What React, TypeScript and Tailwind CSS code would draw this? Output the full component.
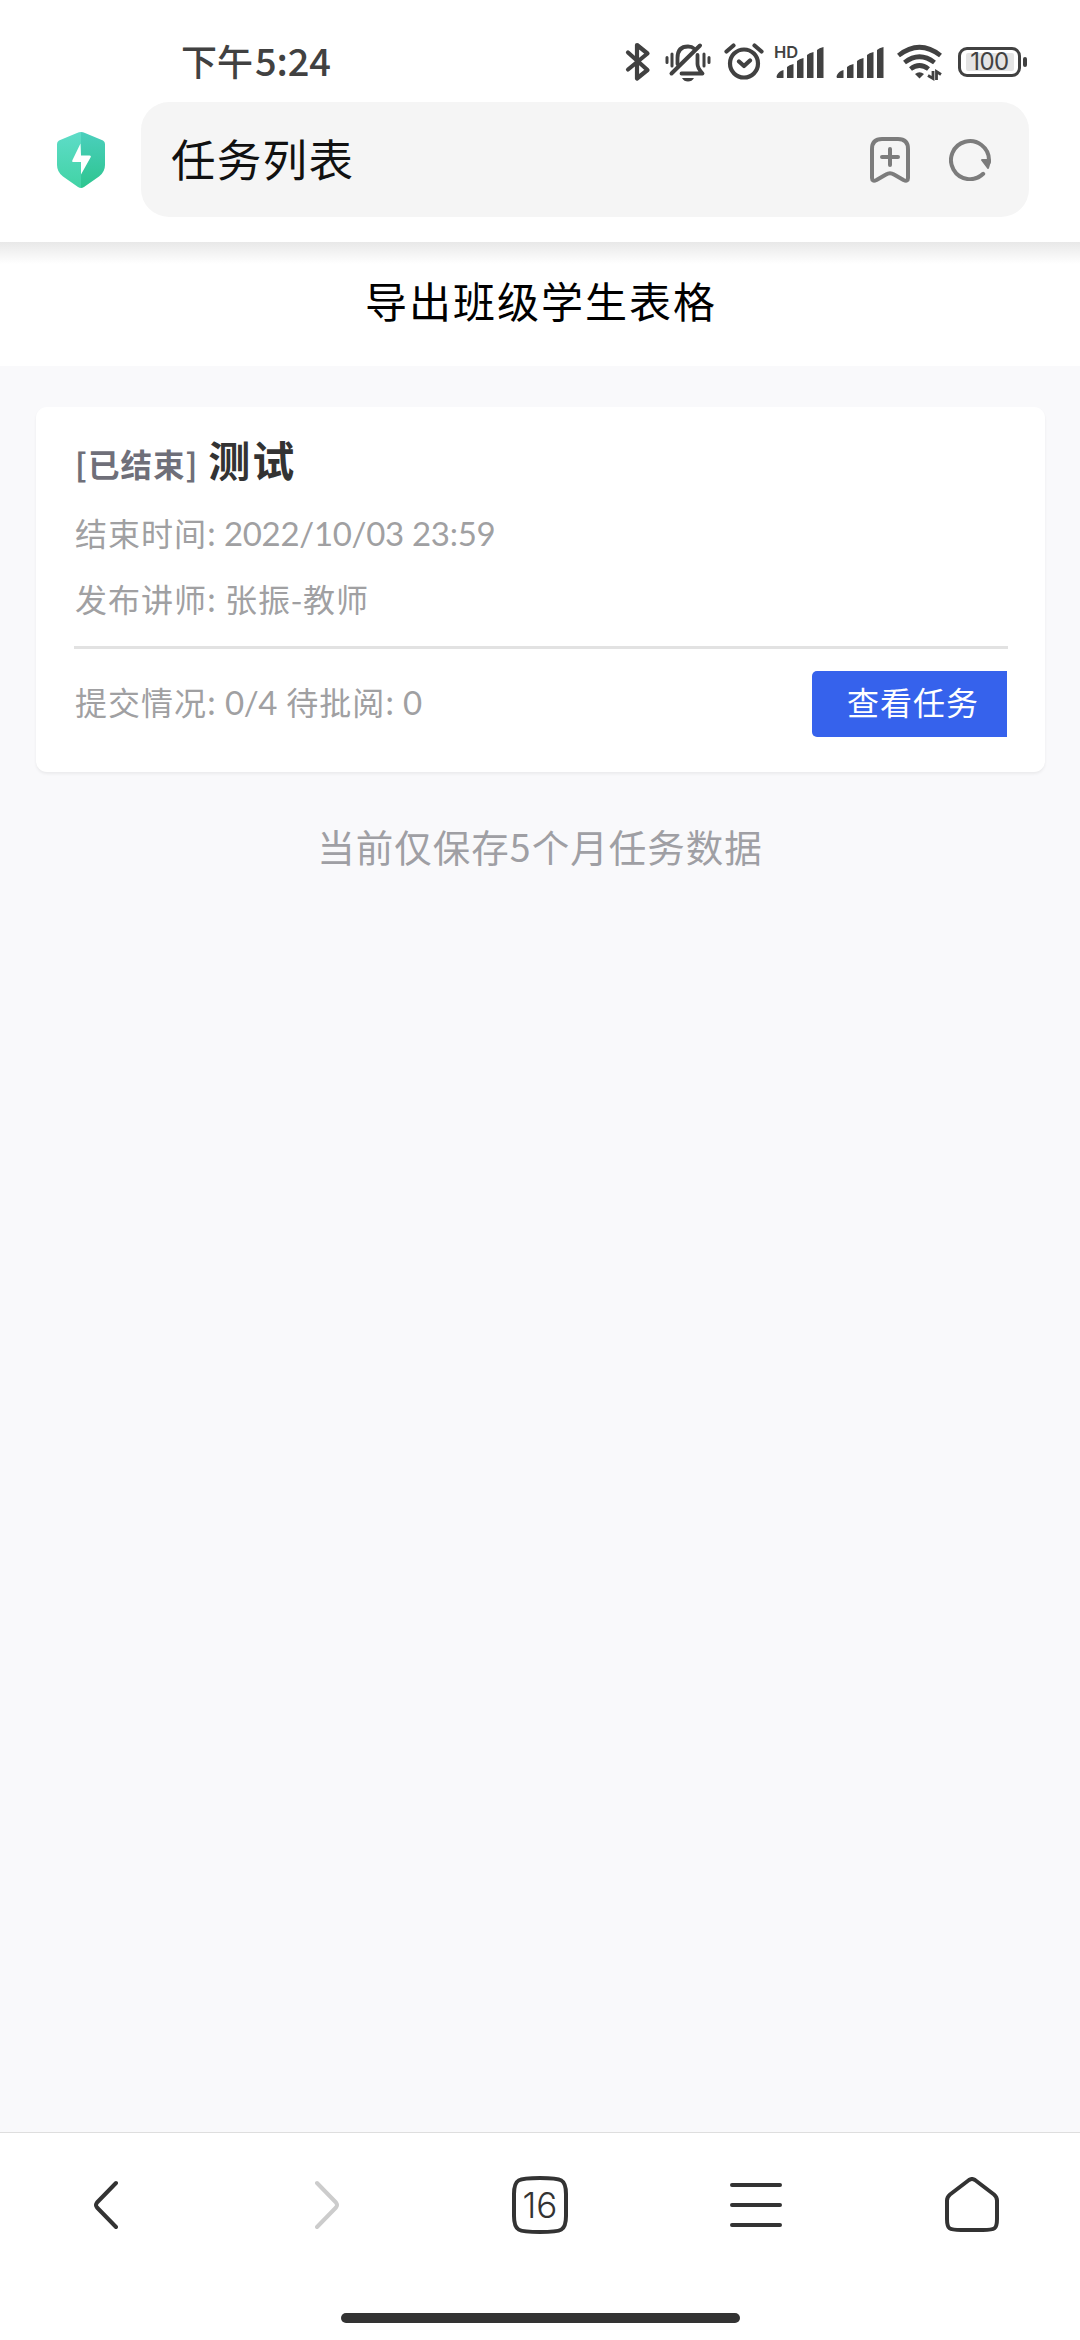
const CJK = "font-['Noto_Sans_CJK_SC',sans-serif]";
const NUM = "font-[Lato,'Noto_Sans_CJK_SC',sans-serif]";

const TASK = {
  status: "[已结束]",
  title: "测试",
  endTime: "2022/10/03 23:59",
  teacher: "张振-教师",
  submitted: "0/4",
  pending: "0",
};

function SignalBars() {
  return (
    <svg width="48" height="31" viewBox="0 0 48 31" fill="#414141">
      <path d="M1 31q-1-1 0-3 2-4 6.500-5v8zM11 31V20q2-2 6.500-3v14zM21 31V14q2-2 6.500-3v20zM31 31V8q2-2 6.500-3v26zM41 31V3q2-2 6.500-3v31z" />
    </svg>
  );
}

function StatusBar() {
  return (
    <div className="flex h-[102px] items-start pl-[181px] pr-[53px] text-[#414141]">
      <div className={`mt-[35px] flex h-[50px] items-center text-[36px] font-medium leading-none ${CJK}`}>
        <span>下午</span>
        <span className="ml-[2px] text-[38px] tracking-[-0.1px]">5:24</span>
      </div>
      <div className="ml-auto mt-[40px] flex h-[42px]">
        {/* Bluetooth */}
        <svg width="26" height="42" viewBox="0 0 26 42" fill="none" stroke="#414141" strokeWidth="4.2" strokeLinecap="round" strokeLinejoin="round">
          <path d="M3 12.500L22.500 30L12 38.500V5L22.500 13.500L3 29.500" />
        </svg>
        {/* Bell, muted and vibrating */}
        <svg className="ml-[14px]" width="46" height="42" viewBox="0 0 46 42" fill="none" stroke="#414141" strokeWidth="3.800" strokeLinecap="round">
          <path d="M2 17.500v5M7 14v12M39 14v12M44 17.500v5" strokeWidth="3" />
          <path d="M12.500 24V18q0-11.500 10.500-11.500q4 0 6 2M32.500 15v9q0 4 5 9.500H16.500" strokeLinejoin="round" />
          <path d="M6.500 33.500L35 5.500" strokeWidth="4" />
          <path d="M17 38h12q-2 3.500-6 3.500t-6-3.500z" fill="#414141" stroke="none" />
        </svg>
        {/* Alarm clock */}
        <svg className="ml-[13px]" width="40" height="42" viewBox="0 0 40 42" fill="none" stroke="#414141" strokeWidth="4.200" strokeLinecap="round">
          <circle cx="20" cy="23.500" r="14" />
          <path d="M2.500 11.500l7-6M37.500 11.500l-7-6M15 21.500l5 4.500l6-5.500" strokeLinejoin="round" />
        </svg>
        {/* HD signal */}
        <div className="relative ml-[12px] flex w-[49px] items-start pt-[7px]">
          <span className="absolute left-[-2px] top-[4px] font-[Inter,sans-serif] text-[16.500px] font-semibold leading-[16px]">HD</span>
          <SignalBars />
        </div>
        <div className="ml-[11px] pt-[7px]">
          <SignalBars />
        </div>
        {/* Wifi */}
        <svg className="ml-[13px]" width="46" height="42" viewBox="0 0 46 42" fill="none" stroke="#414141" strokeWidth="4.700">
          <path d="M1.500 15.500q21-16.500 42 0M7.500 22.500q15-11.500 30 0M13.500 29q9-7 18 0" />
          <path d="M18 34q4.500-3.500 9 0l-4.500 4.500z" fill="#414141" stroke="none" />
          <path d="M31 35.500l5 3V31M39.500 40V31.500l4.500 3" strokeWidth="2.800" />
        </svg>
        {/* Battery */}
        <div className="ml-[15px] mt-[7px] flex h-[30px] w-[63px] items-center justify-center rounded-[9px] border-[3.500px] border-[#414141]">
          <span className="flex h-[18px] w-[48px] items-center justify-center rounded-[2px] bg-[#e4e4e4] font-[Inter,sans-serif] text-[24px] leading-none tracking-[-0.5px]">100</span>
        </div>
        <span className="ml-[2px] mt-[17px] h-[10px] w-[4px] rounded-[2px] bg-[#414141]" />
      </div>
    </div>
  );
}

function AddressBar() {
  return (
    <div className="flex h-[115px] items-center pl-[57px] pr-[51px]">
      {/* Security shield */}
      <svg width="48" height="56" viewBox="0 0 48 56">
        <defs>
          <linearGradient id="shieldLeft" x1="0" y1="0" x2="0" y2="1">
            <stop offset="0" stopColor="#5edcc8" />
            <stop offset="1" stopColor="#42d3a5" />
          </linearGradient>
          <linearGradient id="shieldRight" x1="0" y1="0" x2="0" y2="1">
            <stop offset="0" stopColor="#4bcfbd" />
            <stop offset="1" stopColor="#2dc58f" />
          </linearGradient>
        </defs>
        <path d="M24 0q-2 0-4 1L2 8.500Q0 9.500 0 12v21q0 7 6 11.500L21 55q1.500 1 3 1z" fill="url(#shieldLeft)" />
        <path d="M24 0q2 0 4 1l18 7.500q2 1 2 3.500v21q0 7-6 11.500L27 55q-1.500 1-3 1z" fill="url(#shieldRight)" />
        <path d="M23.500 11.500L15.500 28q-1 2 1 2h7.500v12.500L33.500 25.500q1-2-1-2H24z" fill="#fff" />
      </svg>
      <div className="ml-[36px] flex h-[115px] flex-1 items-center rounded-[28px] bg-[#f5f5f5] pl-[30px] pr-[38px]">
        <span className={`pb-[3px] text-[44.500px] leading-none tracking-[1.300px] text-[#111] ${CJK}`}>任务列表</span>
        {/* Add bookmark */}
        <svg className="ml-auto" width="40" height="46" viewBox="0 0 40 46" fill="none" stroke="#7c7c7c" strokeWidth="4" strokeLinecap="round" strokeLinejoin="round">
          <path d="M2 12Q2 2 12 2H28Q38 2 38 12V41Q38 45 33.500 43L24 37.500Q20 35 16 37.500L6.500 43Q2 45 2 41z" />
          <path d="M20 12v16M12 20h16" />
        </svg>
        {/* Reload */}
        <svg className="ml-[39px]" width="42" height="42" viewBox="0 0 42 42" fill="none" stroke="#7c7c7c" strokeWidth="4" strokeLinecap="round">
          <path d="M34.200 34.800A19 19 0 1 1 40 21V23" />
          <path d="M33 21h7.500v3l-1.500 5z" fill="#7c7c7c" strokeWidth="2" strokeLinejoin="round" />
        </svg>
      </div>
    </div>
  );
}

function TaskCard() {
  return (
    <section className={`ml-[36px] mr-[35px] mt-[41px] h-[365px] rounded-[11px] bg-white pl-[38px] pr-[37px] text-[32px] text-[#a0a0a2] shadow-[0_2px_3px_rgba(0,0,0,0.06)] ${CJK}`}>
      <div className="flex h-[92px] items-baseline pl-px pt-[23px] font-bold leading-[58px]">
        <span className="text-[31.500px] tracking-[1px] text-[#6f6f79]">{TASK.status}</span>
        <span className="ml-[10px] text-[42px] tracking-[2px] text-[#333]">{TASK.title}</span>
      </div>
      <div className="flex h-[67px] items-baseline pl-px leading-[67px]">
        <span className="tracking-[1px]">结束时间:</span>
        <span className={`ml-[7px] text-[33px] tracking-[-0.3px] ${NUM}`}>{TASK.endTime}</span>
      </div>
      <div className="flex h-[64px] items-baseline pl-px leading-[64px]">
        <span className="tracking-[1px]">发布讲师:</span>
        <span className="ml-[8px] tracking-[1px]">{TASK.teacher}</span>
      </div>
      <div className="mt-[16px] h-[3px] bg-[#e2e2e2]" />
      <div className="mt-[22px] flex h-[66px] items-center pl-px pr-px">
        <div className="flex items-baseline pb-[6px] leading-[60px]">
          <span className="tracking-[1px]">提交情况:</span>
          <span className={`ml-[8px] text-[33px] tracking-[-0.3px] ${NUM}`}>{TASK.submitted}</span>
          <span className="ml-[9px] tracking-[1px]">待批阅:</span>
          <span className={`ml-[8px] text-[33px] ${NUM}`}>{TASK.pending}</span>
        </div>
        <button className="ml-auto h-[66px] w-[195px] rounded-l-[5px] bg-[#3662ec] pb-[6px] pl-[7px] text-[32px] leading-none tracking-[1px] text-white">
          查看任务
        </button>
      </div>
    </section>
  );
}

function BottomNav() {
  return (
    <nav className="h-[208px] border-t border-[#dedede] bg-white">
      <div className="flex h-[143px] items-center pl-[93px] pr-[80px]">
        <svg width="25" height="50" viewBox="0 0 25 50" fill="none" stroke="#333" strokeWidth="4" strokeLinecap="round" strokeLinejoin="round">
          <path d="M23 3L4 22.500Q2 25 4 27.500L23 47" />
        </svg>
        <svg className="ml-[197px]" width="25" height="50" viewBox="0 0 25 50" fill="none" stroke="#ccc" strokeWidth="4" strokeLinecap="round" strokeLinejoin="round">
          <path d="M2 3L21 22.500Q23 25 21 27.500L2 47" />
        </svg>
        <div className="relative ml-[172px] flex h-[58px] w-[56px] items-center justify-center">
          <svg className="absolute inset-0" width="56" height="58" viewBox="0 0 56 58" fill="none" stroke="#333" strokeWidth="4">
            <path d="M28 2C50 2 54 3 54 18V40C54 55 50 56 28 56S2 55 2 40V18C2 3 6 2 28 2z" />
          </svg>
          <span className="pt-[2px] font-[Inter,sans-serif] text-[35px] font-light leading-none text-[#333]">16</span>
        </div>
        <svg className="ml-[162px]" width="52" height="44" viewBox="0 0 52 44" stroke="#333" strokeWidth="4" strokeLinecap="round">
          <path d="M2 2h48M2 22h48M2 42h48" />
        </svg>
        <svg className="ml-[163px]" width="54" height="55" viewBox="0 0 54 55" fill="none" stroke="#333" strokeWidth="4" strokeLinejoin="round">
          <path d="M24 3Q27 1 30 3L49 17.500Q52 20 52 23.500V42C52 52 50 53 38 53H16C4 53 2 52 2 42V23.500Q2 20 5 17.500z" />
        </svg>
      </div>
      <div className="mx-auto mt-[37px] h-[10px] w-[399px] rounded-full bg-[#333]" />
    </nav>
  );
}

export default function App() {
  return (
    <div className="flex h-[2340px] w-[1080px] flex-col overflow-hidden bg-[#f9f9fb]">
      <header className="h-[242px] bg-white">
        <StatusBar />
        <AddressBar />
      </header>

      <div className="h-[124px] bg-white">
        <div className="h-[22px] bg-gradient-to-b from-[#e8e8e8] to-white" />
        <h1 className={`pl-[2px] text-center text-[42px] leading-[72px] tracking-[2px] text-black ${CJK}`}>
          导出班级学生表格
        </h1>
      </div>

      <main className="flex-1">
        <TaskCard />
        <p className={`mt-[46px] text-center text-[37.500px] leading-[56px] tracking-[1px] text-[#9f9fa4] ${CJK}`}>
          当前仅保存5个月任务数据
        </p>
      </main>

      <BottomNav />
    </div>
  );
}
